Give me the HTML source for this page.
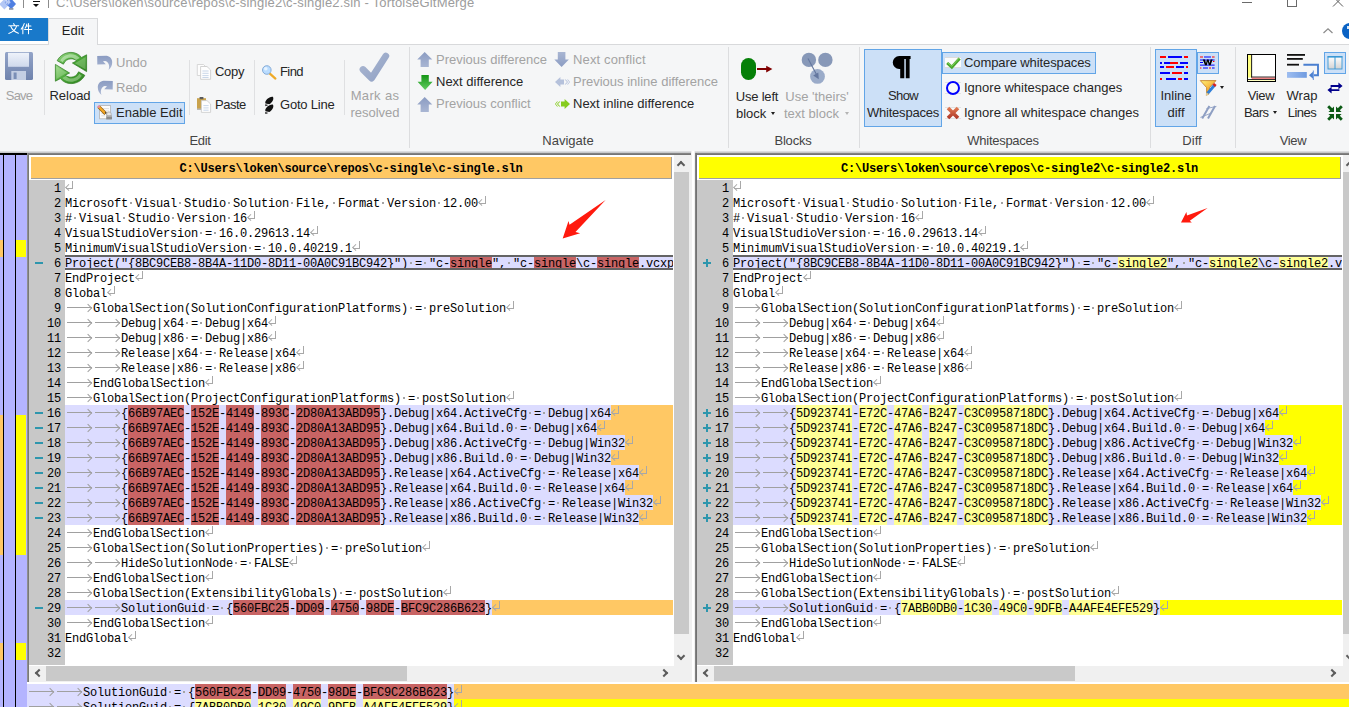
<!DOCTYPE html>
<html><head><meta charset="utf-8"><title>TortoiseGitMerge</title>
<style>
*{margin:0;padding:0;box-sizing:border-box}
html,body{width:1349px;height:707px;overflow:hidden;background:#fff}
body{font-family:"Liberation Sans",sans-serif;font-size:13px;color:#1e1e1e;position:relative}
.abs,#app *{position:absolute}
#app{position:absolute;left:0;top:0;width:1349px;height:707px;overflow:hidden;background:#fff}
/* ---------- title / tabs ---------- */
#title{opacity:0.99;left:56px;top:-5px;font-size:13px;line-height:16px;color:#9c9c9c;white-space:pre;letter-spacing:0.18px}
#filebtn{left:0;top:18px;width:48px;height:23px;background:#1979ca}
#edittab{left:48px;top:18px;width:50px;height:27px;background:#f5f6f7;border:1px solid #d8d9db;border-bottom:none}
#edittab span{left:0;width:48px;top:4px;text-align:center;font-size:13px;line-height:16px;color:#1e1e1e}
#ribbon{left:0;top:44px;width:1349px;height:108px;background:#f5f6f7;border-top:1px solid #d8d9db}
#ribshadow{left:0;top:151px;width:1349px;height:2px;background:linear-gradient(#e6e7e9,#bfc0c2)}
.gsep{top:47px;width:1px;height:101px;background:#dcdddf}
.sep{top:60px;width:1px;height:55px;background:#dfe0e2}
.lb{white-space:pre;line-height:16px;font-size:13px;color:#262626;margin-top:1px}
.lb.c{text-align:center}
.dis{color:#a3a3a3}
.gl{color:#444;text-align:center;top:133px;line-height:16px;white-space:pre}
.hot{background:#cce0f7;border:1px solid #62a5e7}
.dd{width:0;height:0;border-left:2.8px solid transparent;border-right:2.8px solid transparent;border-top:3.2px solid #1e1e1e}
svg{overflow:visible}
/* ---------- work area ---------- */
#loc{left:0;top:153px;width:27px;height:554px;background:#b4b4ff;border-top:2px solid #000}
#loc i{background:#000;width:1px;top:0;height:554px}
.pborder{background:#808080}
.hdr{top:157px;height:22px;font-family:"Liberation Mono",monospace;font-weight:bold;font-size:12px;letter-spacing:-0.2px;line-height:25px;text-align:center;color:#000;white-space:pre;border-right:1px solid #a0a0a0;border-bottom:1px solid #a0a0a0}
.pane{top:180px;height:486px;overflow:hidden}
.row{left:0;width:100%;height:15px}
.mg{left:0;top:0;width:36px;height:15px;background:#c8c8c8}
.mg span{right:4px;top:0;font-family:"Liberation Mono",monospace;font-size:12px;letter-spacing:-0.2px;line-height:19px;height:15px;color:#000;white-space:pre}
.mgfill{left:0;width:36px;background:#c8c8c8}
.mi{left:6px;top:7px;width:8px;height:2px;background:#2e96ad}
.pl{left:6px;top:7px;width:8px;height:2px;background:#2e96ad}
.pl:after{content:"";position:absolute;left:3px;top:-3px;width:2px;height:8px;background:#2e96ad}
.ln{left:36px;top:0;right:0;height:15px;overflow:hidden}
.ln u{top:0;height:15px;text-decoration:none}
.ln pre{left:0;top:0;height:15px;font-family:"Liberation Mono",monospace;font-size:12px;letter-spacing:-0.2px;line-height:19px;white-space:pre;color:#000}
.ln .d{top:7px;width:2px;height:2px;background:#a4a4a4}
.tb{top:0;width:28px;height:15px}
.tb:before{content:"";position:absolute;left:2px;top:7px;width:25px;height:1px;background:#a0a0a0}
.tb:after{content:"";position:absolute;left:20.3px;top:5px;width:5px;height:5px;border-top:1px solid #a0a0a0;border-right:1px solid #a0a0a0;transform:rotate(45deg)}
.eol{top:0;width:7px;height:15px}
.eol:before{content:"";position:absolute;left:1px;top:1px;width:6px;height:7px;border-right:1px solid #a8a8a8;border-bottom:1px solid #a8a8a8}
.eol:after{content:"";position:absolute;left:1.4px;top:5px;width:4.4px;height:4.4px;border-left:1px solid #a8a8a8;border-bottom:1px solid #a8a8a8;transform:rotate(45deg)}
.selb{height:2px;background:#646464}
.sbv{top:155px;width:17px;height:511px;background:#f0f0f0}
.sbh{top:666px;height:16px;background:#f0f0f0}
.thumb{background:#c9c9c9}
.chev{width:6px;height:6px;border-left:2px solid #5c5c5c;border-top:2px solid #5c5c5c}
#bot{left:27px;top:684px;width:1322px;height:23px;overflow:hidden}
#bot .ln{left:0;width:1322px}
</style></head><body>
<div id="app">

<!-- title bar -->
<svg style="left:0;top:0" width="16" height="10" viewBox="0 0 16 10"><path d="M4.4 -1L9.4 4.2L4.4 9.6L-0.8 4.2Z" fill="#b3c7f5"/><path d="M11.2 -1.4L16 4L11.2 9.2L6.2 4Z" fill="#4f7fe2"/><path d="M7.8 -1L11 2.4L7.8 5.8L4.6 2.4Z" fill="#88a6ec"/><path d="M6 0.4H7V1.4H6ZM8 0.4H9V1.4H8ZM7 1.4H8V2.4H7ZM9 1.4H10V2.4H9ZM6 2.4H7V3.4H6ZM8 2.4H9V3.4H8Z" fill="#e4ecfb"/><rect x="9" y="8" width="4.4" height="1.8" fill="#8d97ad"/></svg>
<div style="left:23px;top:0;width:1px;height:8px;background:#8c8c8c"></div>
<div style="left:33px;top:1px;width:7px;height:1.4px;background:#111"></div>
<div style="left:33.4px;top:4px;width:0;height:0;border-left:3.1px solid transparent;border-right:3.1px solid transparent;border-top:3.1px solid #111"></div>
<div style="left:48px;top:0;width:1px;height:8px;background:#8c8c8c"></div>
<div id="title">C:\Users\loken\source\repos\c-single2\c-single2.sln - TortoiseGitMerge</div>
<div style="left:1242px;top:2px;width:10px;height:1px;background:#6a6a6a"></div>
<div style="left:1287px;top:-4px;width:10px;height:11px;border:1px solid #6a6a6a"></div>
<svg style="left:1333px;top:-4px" width="10" height="11" viewBox="0 0 10 11"><path d="M0 0.5L10 10.5M10 0.5L0 10.5" stroke="#5a5a5a" stroke-width="1" fill="none"/></svg>

<!-- tab row -->
<div id="filebtn">
<svg style="left:8px;top:5px" width="24.5" height="11.5" viewBox="0 0 32 15" fill="none" stroke="#fff" stroke-width="1.35" stroke-linecap="round">
<path d="M7.3 0.8L8.3 2.6M1 3.6H14M3.6 4.2C5 8 8.5 11.6 13.6 13.4M11.2 4.2C10 8.5 6.5 11.8 1 13.6"/>
<path d="M21.2 0.8C20.4 3.6 19 6 17.2 8M19.4 5.2V14M24.6 1.4C24.2 3.6 23.4 5.4 22.4 6.6M24 4H30M21.6 8.6H31M26.8 0.8V14"/>
</svg></div>
<div id="edittab"><span>Edit</span></div>
<svg style="left:1323px;top:28px" width="10" height="6" viewBox="0 0 10 6"><path d="M0.5 5L5 0.8L9.5 5" stroke="#8a8a8a" stroke-width="1.2" fill="none"/></svg>
<div style="left:1342px;top:23px;width:16px;height:16px;border-radius:8px;background:#0a62c4"></div>
<div style="left:1347px;top:26px;width:2px;height:3px;background:#dbe8f7"></div>

<!-- ribbon -->
<div id="ribbon"></div>
<div id="edittab2" style="left:49px;top:43px;width:48px;height:3px;background:#f5f6f7"></div>
<div id="ribshadow"></div>
<svg width="0" height="0" style="left:0;top:0"><defs>
<linearGradient id="gSave" x1="0" y1="0" x2="0" y2="1"><stop offset="0" stop-color="#93a4c8"/><stop offset="1" stop-color="#6f83ad"/></linearGradient>
<linearGradient id="gSaveL" x1="0" y1="0" x2="0" y2="1"><stop offset="0" stop-color="#eef2fa"/><stop offset="1" stop-color="#cfd9ec"/></linearGradient>
<linearGradient id="gGreen" x1="0" y1="0" x2="1" y2="1"><stop offset="0" stop-color="#9edb8c"/><stop offset="0.5" stop-color="#4aa838"/><stop offset="1" stop-color="#2a7d1c"/></linearGradient>
<linearGradient id="gGreen2" x1="1" y1="1" x2="0" y2="0"><stop offset="0" stop-color="#9edb8c"/><stop offset="0.5" stop-color="#4aa838"/><stop offset="1" stop-color="#2a7d1c"/></linearGradient>
<linearGradient id="gArr" x1="0" y1="0" x2="0" y2="1"><stop offset="0" stop-color="#8b9cc2"/><stop offset="1" stop-color="#a9b6d3"/></linearGradient>
<linearGradient id="gArrD" x1="0" y1="0" x2="0" y2="1"><stop offset="0" stop-color="#a9b6d3"/><stop offset="1" stop-color="#8b9cc2"/></linearGradient>
<linearGradient id="gGArr" x1="0" y1="0" x2="0" y2="1"><stop offset="0" stop-color="#159515"/><stop offset="1" stop-color="#62cc62"/></linearGradient>
<linearGradient id="gChk" x1="0" y1="0" x2="1" y2="1"><stop offset="0" stop-color="#a9b6d1"/><stop offset="1" stop-color="#93a3c5"/></linearGradient>
<linearGradient id="gFun" x1="0" y1="0" x2="1" y2="1"><stop offset="0" stop-color="#fff27a"/><stop offset="1" stop-color="#f08a10"/></linearGradient>
<linearGradient id="gPane" x1="0" y1="0" x2="0" y2="1"><stop offset="0" stop-color="#ffffff"/><stop offset="1" stop-color="#d2d2d2"/></linearGradient>
<linearGradient id="gRedX" x1="0" y1="0" x2="0" y2="1"><stop offset="0" stop-color="#e07850"/><stop offset="1" stop-color="#b03a2a"/></linearGradient>
<linearGradient id="gBlueR" x1="0" y1="0" x2="1" y2="0"><stop offset="0" stop-color="#9dbdf0"/><stop offset="1" stop-color="#6f9be0"/></linearGradient>
</defs></svg>

<!-- group separators -->
<div class="gsep" style="left:409px"></div><div class="gsep" style="left:728px"></div><div class="gsep" style="left:859px"></div>
<div class="gsep" style="left:1150px"></div><div class="gsep" style="left:1235px"></div>
<div class="sep" style="left:44px"></div><div class="sep" style="left:189px"></div><div class="sep" style="left:254px"></div><div class="sep" style="left:344px"></div>

<!-- group labels -->
<div class="gl" style="left:150px;width:100px;letter-spacing:-0.4px">Edit</div>
<div class="gl" style="left:518px;width:100px">Navigate</div>
<div class="gl" style="left:743px;width:100px;letter-spacing:-0.2px">Blocks</div>
<div class="gl" style="left:953px;width:100px;letter-spacing:-0.28px">Whitespaces</div>
<div class="gl" style="left:1142px;width:100px">Diff</div>
<div class="gl" style="left:1243px;width:100px;letter-spacing:-0.4px">View</div>

<!-- Save -->
<svg style="left:5px;top:52px" width="28" height="28" viewBox="0 0 28 28"><rect x="0" y="0" width="28" height="28" rx="1.5" fill="url(#gSave)"/><rect x="3" y="0.8" width="21" height="14" fill="url(#gSaveL)"/><rect x="6.3" y="19" width="14.7" height="9" fill="#c3cee3"/><rect x="8.6" y="20.5" width="3" height="6.5" fill="#7a8eb6"/></svg>
<div class="lb c dis" style="left:-11px;width:60px;top:87px;letter-spacing:-0.8px">Save</div>
<!-- Reload -->
<svg style="left:55px;top:52px" width="32" height="32" viewBox="0 0 32 32">
<path id="rl" d="M2.2 8.7C5 3.2 10.5 0.4 16 0.4C20.2 0.4 24 2.3 26.6 5.4L31.6 2.8V19.6L17.4 11L21.6 8.9C20.2 7.5 18.2 6.8 16 6.8C12.6 6.8 9.8 8.9 8.4 12.2Z" fill="url(#gGreen)" stroke="#2a7a1a" stroke-width="0.7"/>
<path d="M2.2 8.7C5 3.2 10.5 0.4 16 0.4C20.2 0.4 24 2.3 26.6 5.4L31.6 2.8V19.6L17.4 11L21.6 8.9C20.2 7.5 18.2 6.8 16 6.8C12.6 6.8 9.8 8.9 8.4 12.2Z" fill="url(#gGreen2)" stroke="#2a7a1a" stroke-width="0.7" transform="rotate(180 16 16)"/>
<path d="M5.2 8.2C7.6 4.4 11.6 2.2 16 2.2C19.4 2.2 22.6 3.6 24.8 6L21 8C19.4 6.2 17.6 5.4 16 5.4C12.4 5.4 9.2 7.4 7.6 10.2Z" fill="#d9f2cf" opacity="0.55"/>
<path d="M5.2 8.2C7.6 4.4 11.6 2.2 16 2.2C19.4 2.2 22.6 3.6 24.8 6L21 8C19.4 6.2 17.6 5.4 16 5.4C12.4 5.4 9.2 7.4 7.6 10.2Z" fill="#d9f2cf" opacity="0.4" transform="rotate(180 16 16)"/>
<path d="M30.6 5L30.6 17.6L20 11.2Z" fill="#bfe6b0" opacity="0.35"/>
<path d="M30.6 5L30.6 17.6L20 11.2Z" fill="#bfe6b0" opacity="0.35" transform="rotate(180 16 16)"/>
</svg>
<div class="lb c" style="left:40px;width:60px;top:87px">Reload</div>
<!-- Undo / Redo / Enable Edit -->
<svg style="left:97px;top:54px" width="16" height="16" viewBox="0 0 16 16"><path d="M0.2 1.9L9.4 1.7C12.8 2 15.2 4.8 15.2 8.2C15.2 11.2 14 13.8 11.5 15.9C12.2 14 12.4 12 11.8 10.4C11 8.2 9.6 7.2 8 7L6 7.2L8.8 10.2L0.3 10.4Z" fill="url(#gArr)"/></svg>
<div class="lb dis" style="left:116px;top:54px">Undo</div>
<svg style="left:97.3px;top:78.7px" width="16" height="16" viewBox="0 0 16 16"><path transform="translate(16 0) scale(-1 1)" d="M0.2 1.9L9.4 1.7C12.8 2 15.2 4.8 15.2 8.2C15.2 11.2 14 13.8 11.5 15.9C12.2 14 12.4 12 11.8 10.4C11 8.2 9.6 7.2 8 7L6 7.2L8.8 10.2L0.3 10.4Z" fill="url(#gArr)"/></svg>
<div class="lb dis" style="left:116px;top:79px">Redo</div>
<div class="hot" style="left:94px;top:102px;width:91px;height:22px"></div>
<svg style="left:98px;top:104px" width="16" height="16" viewBox="0 0 16 16"><rect x="1.6" y="1.6" width="11" height="13.2" fill="#fbfbfb" stroke="#b4b4b4" stroke-width="0.8"/><path d="M3.4 4.6H11M3.4 7H11M3.4 9.4H8M3.4 11.8H7" stroke="#d6d6d6" stroke-width="0.8"/><path d="M0.6 2.6L7.6 9.8" stroke="#8a5a10" stroke-width="3.4"/><path d="M0.8 2.8L7.4 9.6" stroke="#f6a823" stroke-width="2.2"/><path d="M0 1.9L1.5 3.4" stroke="#e98aa0" stroke-width="2.6"/><path d="M6.6 8.4L9 11.2L8 8Z" fill="#3a3a3a"/><circle cx="11" cy="10.2" r="2.3" fill="#e6e6e6" stroke="#b0b0b0" stroke-width="0.9"/><rect x="8.2" y="11.6" width="5.8" height="3.8" fill="#8a8a8a"/><rect x="8.2" y="11.6" width="5.8" height="1.2" fill="#b4b4b4"/></svg>
<div class="lb" style="left:116px;top:104px">Enable Edit</div>
<!-- Copy / Paste -->
<svg style="left:196px;top:64px" width="16" height="16" viewBox="0 0 16 16"><path d="M1.3 0.5H7.5L10 3V11.5H1.3Z" fill="#fdfdfd" stroke="#cfcfcf" stroke-width="0.8"/><path d="M4.6 2.5H11L14.6 6V15.3H4.6Z" fill="#fefefe" stroke="#c8c8c8" stroke-width="0.8"/><path d="M6.4 7H12.6M6.4 9.3H12.6M6.4 11.6H12.6M6.4 13.5H12.6" stroke="#c3d3e6" stroke-width="0.9"/></svg>
<div class="lb" style="left:215px;top:63px;letter-spacing:-0.3px">Copy</div>
<svg style="left:196px;top:97px" width="16" height="16" viewBox="0 0 16 16"><rect x="1" y="1.2" width="9" height="11.5" fill="#c9a24c"/><rect x="1" y="11.5" width="9" height="1.4" fill="#b9b9b9"/><rect x="3.6" y="0" width="3.8" height="2.2" fill="#5a5a5a"/><path d="M5.4 3.6H11L14.6 7V15.4H5.4Z" fill="#fefefe" stroke="#cacaca" stroke-width="0.8"/><path d="M7.4 8.6H12.6M7.4 10.9H12.6M7.4 13.2H12.6" stroke="#c3d3e6" stroke-width="0.9"/></svg>
<div class="lb" style="left:215px;top:96px;letter-spacing:-0.5px">Paste</div>
<!-- Find / Goto -->
<svg style="left:262px;top:64px" width="16" height="16" viewBox="0 0 16 16"><path d="M7.6 9.4L13.4 14.6" stroke="#eeaa28" stroke-width="2.2" stroke-linecap="round"/><circle cx="4.8" cy="6" r="4.3" fill="#b9dcff" stroke="#86acd8" stroke-width="1"/><circle cx="3.8" cy="4.8" r="1.8" fill="#e8f4ff"/></svg>
<div class="lb" style="left:280px;top:63px;letter-spacing:-0.6px">Find</div>
<svg style="left:263px;top:96px" width="12" height="18" viewBox="0 0 12 18"><path d="M9.8 0.8C11.3 2.6 9.6 6.4 6.4 8.3L2.4 7.4C1.4 4.6 6.4 0.2 9.8 0.8ZM2.2 8.3L5.4 9.1L2.4 10.2Z" fill="#111"/><path d="M9.8 8.6C11.3 10.4 9.6 14.2 6.4 16.1L2.4 15.2C1.4 12.4 6.4 8 9.8 8.6ZM2.2 16.1L5.4 16.9L2.4 18Z" fill="#111"/></svg>
<div class="lb" style="left:280px;top:96px;letter-spacing:-0.2px">Goto Line</div>
<!-- Mark as resolved -->
<svg style="left:358px;top:51px" width="34" height="32" viewBox="0 0 34 32"><path d="M5 18.5L13.6 27.2L27.8 5" stroke="url(#gChk)" stroke-width="6.8" stroke-linecap="round" stroke-linejoin="round" fill="none"/></svg>
<div class="lb c dis" style="left:335px;width:80px;top:87px;letter-spacing:0.35px">Mark as</div>
<div class="lb c dis" style="left:335px;width:80px;top:104px">resolved</div>

<!-- Navigate -->
<svg style="left:417px;top:52px" width="16" height="15" viewBox="0 0 16 15"><path d="M7.7 0L15.3 7.6H11.8V15H3.6V7.6H0.2Z" fill="url(#gArr)"/></svg>
<div class="lb dis" style="left:436px;top:51px">Previous difference</div>
<svg style="left:417px;top:75px" width="16" height="15" viewBox="0 0 16 15"><path d="M4.4 0H11.8V6.8H15.6L8.1 15L0.6 6.8H4.4Z" fill="url(#gGArr)"/></svg>
<div class="lb" style="left:436px;top:73px">Next difference</div>
<svg style="left:417px;top:97px" width="16" height="15" viewBox="0 0 16 15"><path d="M7.7 0L15.3 7.6H11.8V15H3.6V7.6H0.2Z" fill="url(#gArr)"/></svg>
<div class="lb dis" style="left:436px;top:95px">Previous conflict</div>
<svg style="left:554px;top:52px" width="16" height="15" viewBox="0 0 16 15"><path d="M3.8 0H11.4V7.4H14.9L7.6 15L0.3 7.4H3.8Z" fill="url(#gArrD)"/></svg>
<div class="lb dis" style="left:573px;top:51px;letter-spacing:0.15px">Next conflict</div>
<svg style="left:555px;top:77px" width="15" height="10" viewBox="0 0 15 10"><path d="M0 5L5.4 0V2.6H9V7.4H5.4V10Z" fill="#b5c1db"/><path d="M9.6 2.6L12 5L9.6 7.4H10.8L13 5L10.8 2.6ZM12 2.6L14.2 5L12 7.4H13L15 5L13 2.6Z" fill="#b5c1db"/></svg>
<div class="lb dis" style="left:573px;top:73px">Previous inline difference</div>
<svg style="left:555px;top:99px" width="15" height="10" viewBox="0 0 15 10"><path d="M15 5L9.6 0V2.6H6V7.4H9.6V10Z" fill="#86cc1e"/><path d="M5.4 2.6L3 5L5.4 7.4H4.2L2 5L4.2 2.6ZM3 2.6L0.8 5L3 7.4H2L0 5L2 2.6Z" fill="#86cc1e"/></svg>
<div class="lb" style="left:573px;top:95px">Next inline difference</div>

<!-- Blocks -->
<div style="left:741px;top:57.5px;width:15px;height:22.5px;border-radius:7.5px;background:#058008"></div>
<svg style="left:757px;top:65px" width="16" height="8" viewBox="0 0 16 8"><path d="M0 3.1H10V5.1H0Z M9.2 0.8L15.4 4.1L9.2 7.4Z" fill="#800000"/></svg>
<div class="lb c" style="left:717px;width:80px;top:88px;letter-spacing:-0.2px">Use left</div>
<div class="lb" style="left:736px;top:105px">block</div>
<div class="dd" style="left:771px;top:112px;border-top-color:#1e1e1e"></div>
<svg style="left:800px;top:51px" width="34" height="34" viewBox="0 0 34 34"><circle cx="8.9" cy="8.9" r="7.2" fill="#8798b8"/><circle cx="25.4" cy="8.9" r="7.2" fill="#8798b8"/><circle cx="17.5" cy="25.4" r="7.4" fill="#9aabc9"/><path d="M8 7.4L17.3 25" stroke="#64779f" stroke-width="1.1"/><path d="M18.8 28.2L18.3 21.6L13.2 24.4Z" fill="#64779f"/></svg>
<div class="lb c dis" style="left:777px;width:80px;top:88px">Use 'theirs'</div>
<div class="lb dis" style="left:784px;top:105px">text block</div>
<div class="dd" style="left:845px;top:112px;border-top-color:#b4b4b4"></div>

<!-- Whitespaces -->
<div class="hot" style="left:864px;top:49px;width:78px;height:78px"></div>
<svg style="left:892px;top:56px" width="19" height="23" viewBox="0 0 19 23"><path d="M7.2 0H18.6V3H17.6V22.2H13.8V3H12.3V22.2H8.2V12.9H7.2A6.45 6.45 0 0 1 7.2 0Z" fill="#000"/></svg>
<div class="lb c" style="left:863px;width:80px;top:87px;letter-spacing:-0.6px">Show</div>
<div class="lb c" style="left:863px;width:80px;top:104px;letter-spacing:-0.22px">Whitespaces</div>
<div class="hot" style="left:942px;top:52px;width:154px;height:22px"></div>
<div style="left:945px;top:57px;width:16px;height:11px;background:#fbfbfb;border-top:1px solid #dcdcdc;border-bottom:1px solid #dcdcdc"></div>
<svg style="left:945px;top:55px" width="16" height="16" viewBox="0 0 16 16"><path d="M2.2 8L6.8 12.2L14.6 3.4" stroke="#4aa82c" stroke-width="3" fill="none" stroke-linejoin="miter"/><path d="M2.6 7.6L6.8 11.2L14 3.2" stroke="#8fd86a" stroke-width="0.9" fill="none"/></svg>
<div class="lb" style="left:964px;top:54px;letter-spacing:-0.1px">Compare whitespaces</div>
<div style="left:945px;top:82px;width:16px;height:12px;background:#f9f9f9;border-top:1px solid #e2e2e2;border-bottom:1px solid #e2e2e2"></div>
<div style="left:946px;top:81px;width:14px;height:14px;border-radius:7px;border:2px solid #0000ff"></div>
<div class="lb" style="left:964px;top:79px">Ignore whitespace changes</div>
<div style="left:945px;top:107px;width:16px;height:12px;background:#f9f9f9;border-top:1px solid #e2e2e2;border-bottom:1px solid #e2e2e2"></div>
<svg style="left:946px;top:106px" width="14" height="14" viewBox="0 0 14 14"><path d="M2 2L12 12M12 2L2 12" stroke="url(#gRedX)" stroke-width="3.6"/></svg>
<div class="lb" style="left:964px;top:104px">Ignore all whitespace changes</div>

<!-- Diff -->
<div class="hot" style="left:1155px;top:49px;width:42px;height:78px"></div>
<svg style="left:1160px;top:56px" width="28" height="24" viewBox="0 0 28 24">
<g fill="#ff0000"><rect x="0" y="0" width="6" height="2"/><rect x="24" y="0" width="4" height="2"/><rect x="10" y="6" width="8" height="2"/><rect x="6" y="10" width="8" height="2"/><rect x="26" y="10" width="2" height="2"/><rect x="12" y="16" width="10" height="2"/><rect x="0" y="22" width="2" height="2"/><rect x="18" y="22" width="4" height="2"/></g>
<g fill="#0000ff"><rect x="8" y="0" width="14" height="2"/><rect x="0" y="6" width="2" height="2"/><rect x="4" y="6" width="6" height="2"/><rect x="20" y="6" width="8" height="2"/><rect x="0" y="10" width="4" height="2"/><rect x="16" y="10" width="8" height="2"/><rect x="0" y="16" width="10" height="2"/><rect x="24" y="16" width="4" height="2"/><rect x="6" y="22" width="10" height="2"/><rect x="24" y="22" width="4" height="2"/></g></svg>
<div class="lb c" style="left:1136px;width:80px;top:87px">Inline</div>
<div class="lb c" style="left:1136px;width:80px;top:104px">diff</div>
<div class="hot" style="left:1197px;top:52px;width:22px;height:22px"></div>
<svg style="left:1200px;top:55px" width="16" height="16" viewBox="0 0 16 16">
<g fill="#ff0000"><rect x="0" y="1.5" width="3" height="1"/><rect x="12" y="1.5" width="2.6" height="1"/><rect x="0" y="12.5" width="1.4" height="1"/><rect x="9" y="12.5" width="2" height="1"/><rect x="13" y="6" width="1.4" height="1"/></g>
<g fill="#0000ff"><rect x="4" y="1.5" width="7" height="1"/><rect x="0" y="4.5" width="14.6" height="1"/><rect x="0" y="7" width="3" height="1"/><rect x="0" y="9.6" width="14.6" height="1"/><rect x="3" y="12.5" width="5" height="1"/><rect x="12" y="12.5" width="2.6" height="1"/></g>
<path d="M2.8 4.4H5L6 8.3L7 4.4H8.6L9.6 8.3L10.6 4.4H12.6L10.6 10.2H8.8L7.8 6.6L6.8 10.2H5Z" fill="#000"/></svg>
<svg style="left:1200px;top:80px" width="17" height="17" viewBox="0 0 17 17"><path d="M0.3 0.6H16L9.4 7.6V11.2L6.6 12.6V7.6Z" fill="url(#gFun)" stroke="#b86a10" stroke-width="0.7"/><path d="M14.6 5L7.4 13.6" stroke="#2f7fd8" stroke-width="3"/><path d="M15.4 4L13.8 5.9" stroke="#d82020" stroke-width="3.2"/><path d="M6.2 15.6L6.6 12.4L9 14.2Z" fill="#f3d9a0" stroke="#b89040" stroke-width="0.4"/></svg>
<div class="dd" style="left:1220px;top:86px"></div>
<svg style="left:1200px;top:105px" width="17" height="15" viewBox="0 0 17 15"><path d="M2.2 13.6L9.4 1M8 13.6L15 1" stroke="#8e9fc3" stroke-width="2"/><path d="M0.4 12.4L11 8.2M6.4 3.6L16.4 1.4" stroke="#8e9fc3" stroke-width="0.9"/></svg>

<!-- View -->
<svg style="left:1247px;top:54px" width="29" height="28" viewBox="0 0 29 28"><rect x="0.5" y="0.5" width="28" height="27" fill="#fff" stroke="#000"/><rect x="1" y="1" width="3.4" height="22.6" fill="#ffff80"/><rect x="4.2" y="1" width="0.9" height="22.6" fill="#000"/><rect x="4.4" y="22.6" width="24" height="1" fill="#000"/><rect x="4.6" y="23.6" width="23.4" height="1.6" fill="#f08080"/><rect x="1" y="25.2" width="27" height="0.8" fill="#000"/><rect x="1" y="26" width="27" height="1" fill="#ffffc0"/></svg>
<div class="lb c" style="left:1221px;width:80px;top:87px;letter-spacing:-0.3px">View</div>
<div class="lb" style="left:1244px;top:104px;letter-spacing:-0.6px">Bars</div>
<div class="dd" style="left:1273px;top:111px"></div>
<svg style="left:1287px;top:54px" width="32" height="27" viewBox="0 0 32 27"><rect x="0" y="0" width="18" height="1.8" fill="#111"/><rect x="0" y="4" width="15.8" height="1.8" fill="#111"/><rect x="0" y="9.8" width="12" height="1.8" fill="#111"/><path d="M16.4 10.7H31V21.2H24" stroke="#4a7fd0" stroke-width="1.9" fill="none"/><path d="M22 21.2L26.6 17.2V25.2Z" fill="#4a7fd0"/><path d="M26.4 16.6V26" stroke="#7aa2e2" stroke-width="1.2"/><rect x="0" y="18" width="19.8" height="5.8" fill="url(#gBlueR)"/></svg>
<div class="lb c" style="left:1262px;width:80px;top:87px">Wrap</div>
<div class="lb c" style="left:1262px;width:80px;top:104px;letter-spacing:-0.55px">Lines</div>
<div class="hot" style="left:1324px;top:52px;width:22px;height:22px"></div>
<svg style="left:1327px;top:55px" width="16" height="16" viewBox="0 0 16 16"><rect x="1" y="1.6" width="14" height="12.4" fill="url(#gPane)" stroke="#3a98d4" stroke-width="0.9"/><rect x="0.6" y="1" width="14.8" height="1.6" fill="#3a98d4"/><rect x="7.5" y="2" width="1" height="12" fill="#3a98d4"/></svg>
<svg style="left:1327px;top:82px" width="16" height="12" viewBox="0 0 16 12"><path d="M3.6 3H11.4V0.6L15.6 3.9L11.4 7.2V4.9H3.6Z" fill="#00008b"/><path d="M12.4 7.2H4.6V4.8L0.4 8.1L4.6 11.4V9.1H12.4Z" fill="#00008b"/></svg>
<svg style="left:1327px;top:105px" width="16" height="16" viewBox="0 0 16 16"><g fill="#0b5a14"><path d="M7 7H1.4L3.2 5.2L0.2 2.2L2.2 0.2L5.2 3.2L7 1.4Z"/><path d="M9 7V1.4L10.8 3.2L13.8 0.2L15.8 2.2L12.8 5.2L14.6 7Z"/><path d="M7 9V14.6L5.2 12.8L2.2 15.8L0.2 13.8L3.2 10.8L1.4 9Z"/><path d="M9 9H14.6L12.8 10.8L15.8 13.8L13.8 15.8L10.8 12.8L9 14.6Z"/></g></svg>


<!-- locator bar -->
<div id="loc">
 <i style="left:3px"></i><i style="left:15px"></i>
</div>
<div style="left:0;top:240px;width:3px;height:17px;background:#ffc864"></div>
<div style="left:16px;top:240px;width:10px;height:17px;background:#ffff00"></div>
<div style="left:0;top:415px;width:3px;height:140px;background:#ffc864"></div>
<div style="left:16px;top:415px;width:10px;height:140px;background:#ffff00"></div>
<div style="left:0;top:643px;width:3px;height:17px;background:#ffc864"></div>
<div style="left:16px;top:643px;width:10px;height:17px;background:#ffff00"></div>

<!-- pane frames -->
<div style="left:27px;top:153px;width:1322px;height:2px;background:linear-gradient(#8a8a8a,#6e6e6e)"></div>
<div style="left:27px;top:153px;width:2px;height:529px;background:linear-gradient(90deg,#9a9a9a,#6e6e6e)"></div>
<div style="left:695px;top:153px;width:2px;height:529px;background:linear-gradient(90deg,#8a8a8a,#6a6a6a)"></div>
<div style="left:691px;top:151px;width:4px;height:531px;background:#f0f0f0"></div>
<div style="left:692px;top:151px;width:2px;height:531px;background:#fff"></div>

<!-- left pane -->
<div class="hdr" style="left:31px;width:641px;background:#ffc864">C:\Users\loken\source\repos\c-single\c-single.sln</div>
<div class="mgfill" style="left:29px;top:180px;height:485px"></div>
<div class="pane" style="left:29px;width:644px">
<div class="row" style="top:0px"><div class="mg"><span>1</span></div><div class="ln"><i class="eol" style="left:0px"></i></div></div>
<div class="row" style="top:15px"><div class="mg"><span>2</span></div><div class="ln"><i class="d" style="left:65px"></i><i class="d" style="left:114px"></i><i class="d" style="left:163px"></i><i class="d" style="left:226px"></i><i class="d" style="left:268px"></i><i class="d" style="left:317px"></i><i class="d" style="left:373px"></i><pre class="tx">Microsoft Visual Studio Solution File, Format Version 12.00</pre><i class="eol" style="left:413px"></i></div></div>
<div class="row" style="top:30px"><div class="mg"><span>3</span></div><div class="ln"><i class="d" style="left:9px"></i><i class="d" style="left:58px"></i><i class="d" style="left:107px"></i><i class="d" style="left:163px"></i><pre class="tx"># Visual Studio Version 16</pre><i class="eol" style="left:182px"></i></div></div>
<div class="row" style="top:45px"><div class="mg"><span>4</span></div><div class="ln"><i class="d" style="left:135px"></i><i class="d" style="left:149px"></i><pre class="tx">VisualStudioVersion = 16.0.29613.14</pre><i class="eol" style="left:245px"></i></div></div>
<div class="row" style="top:60px"><div class="mg"><span>5</span></div><div class="ln"><i class="d" style="left:184px"></i><i class="d" style="left:198px"></i><pre class="tx">MinimumVisualStudioVersion = 10.0.40219.1</pre><i class="eol" style="left:287px"></i></div></div>
<div class="row sel" style="top:75px"><div class="mg"><i class="mi"></i><span>6</span></div><div class="ln" style="background:#ffc864"><u style="left:0;width:931px;background:#dcdcff"></u><u style="left:385px;width:42px;background:#c86464"></u><u style="left:469px;width:42px;background:#c86464"></u><u style="left:532px;width:42px;background:#c86464"></u><u style="left:665px;width:56px;background:#c86464"></u><u style="left:728px;width:28px;background:#c86464"></u><u style="left:763px;width:28px;background:#c86464"></u><u style="left:798px;width:28px;background:#c86464"></u><u style="left:833px;width:84px;background:#c86464"></u><i class="d" style="left:345px"></i><i class="d" style="left:359px"></i><i class="d" style="left:443px"></i><i class="d" style="left:646px"></i><pre class="tx">Project(&quot;{8BC9CEB8-8B4A-11D0-8D11-00A0C91BC942}&quot;) = &quot;c-single&quot;, &quot;c-single\c-single.vcxproj&quot;, &quot;{66B97AEC-152E-4149-893C-2D80A13ABD95}&quot;</pre><i class="eol" style="left:931px"></i></div></div>
<div class="row" style="top:90px"><div class="mg"><span>7</span></div><div class="ln"><pre class="tx">EndProject</pre><i class="eol" style="left:70px"></i></div></div>
<div class="row" style="top:105px"><div class="mg"><span>8</span></div><div class="ln"><pre class="tx">Global</pre><i class="eol" style="left:42px"></i></div></div>
<div class="row" style="top:120px"><div class="mg"><span>9</span></div><div class="ln"><i class="d" style="left:345px"></i><i class="d" style="left:359px"></i><pre class="tx">    GlobalSection(SolutionConfigurationPlatforms) = preSolution</pre><i class="tb" style="left:0px"></i><i class="eol" style="left:441px"></i></div></div>
<div class="row" style="top:135px"><div class="mg"><span>10</span></div><div class="ln"><i class="d" style="left:121px"></i><i class="d" style="left:135px"></i><pre class="tx">        Debug|x64 = Debug|x64</pre><i class="tb" style="left:0px"></i><i class="tb" style="left:28px"></i><i class="eol" style="left:203px"></i></div></div>
<div class="row" style="top:150px"><div class="mg"><span>11</span></div><div class="ln"><i class="d" style="left:121px"></i><i class="d" style="left:135px"></i><pre class="tx">        Debug|x86 = Debug|x86</pre><i class="tb" style="left:0px"></i><i class="tb" style="left:28px"></i><i class="eol" style="left:203px"></i></div></div>
<div class="row" style="top:165px"><div class="mg"><span>12</span></div><div class="ln"><i class="d" style="left:135px"></i><i class="d" style="left:149px"></i><pre class="tx">        Release|x64 = Release|x64</pre><i class="tb" style="left:0px"></i><i class="tb" style="left:28px"></i><i class="eol" style="left:231px"></i></div></div>
<div class="row" style="top:180px"><div class="mg"><span>13</span></div><div class="ln"><i class="d" style="left:135px"></i><i class="d" style="left:149px"></i><pre class="tx">        Release|x86 = Release|x86</pre><i class="tb" style="left:0px"></i><i class="tb" style="left:28px"></i><i class="eol" style="left:231px"></i></div></div>
<div class="row" style="top:195px"><div class="mg"><span>14</span></div><div class="ln"><pre class="tx">    EndGlobalSection</pre><i class="tb" style="left:0px"></i><i class="eol" style="left:140px"></i></div></div>
<div class="row" style="top:210px"><div class="mg"><span>15</span></div><div class="ln"><i class="d" style="left:338px"></i><i class="d" style="left:352px"></i><pre class="tx">    GlobalSection(ProjectConfigurationPlatforms) = postSolution</pre><i class="tb" style="left:0px"></i><i class="eol" style="left:441px"></i></div></div>
<div class="row" style="top:225px"><div class="mg"><i class="mi"></i><span>16</span></div><div class="ln" style="background:#ffc864"><u style="left:0;width:546px;background:#dcdcff"></u><u style="left:63px;width:56px;background:#c86464"></u><u style="left:126px;width:28px;background:#c86464"></u><u style="left:161px;width:28px;background:#c86464"></u><u style="left:196px;width:28px;background:#c86464"></u><u style="left:231px;width:84px;background:#c86464"></u><i class="d" style="left:464px"></i><i class="d" style="left:478px"></i><pre class="tx">        {66B97AEC-152E-4149-893C-2D80A13ABD95}.Debug|x64.ActiveCfg = Debug|x64</pre><i class="tb" style="left:0px"></i><i class="tb" style="left:28px"></i><i class="eol" style="left:546px"></i></div></div>
<div class="row" style="top:240px"><div class="mg"><i class="mi"></i><span>17</span></div><div class="ln" style="background:#ffc864"><u style="left:0;width:532px;background:#dcdcff"></u><u style="left:63px;width:56px;background:#c86464"></u><u style="left:126px;width:28px;background:#c86464"></u><u style="left:161px;width:28px;background:#c86464"></u><u style="left:196px;width:28px;background:#c86464"></u><u style="left:231px;width:84px;background:#c86464"></u><i class="d" style="left:450px"></i><i class="d" style="left:464px"></i><pre class="tx">        {66B97AEC-152E-4149-893C-2D80A13ABD95}.Debug|x64.Build.0 = Debug|x64</pre><i class="tb" style="left:0px"></i><i class="tb" style="left:28px"></i><i class="eol" style="left:532px"></i></div></div>
<div class="row" style="top:255px"><div class="mg"><i class="mi"></i><span>18</span></div><div class="ln" style="background:#ffc864"><u style="left:0;width:560px;background:#dcdcff"></u><u style="left:63px;width:56px;background:#c86464"></u><u style="left:126px;width:28px;background:#c86464"></u><u style="left:161px;width:28px;background:#c86464"></u><u style="left:196px;width:28px;background:#c86464"></u><u style="left:231px;width:84px;background:#c86464"></u><i class="d" style="left:464px"></i><i class="d" style="left:478px"></i><pre class="tx">        {66B97AEC-152E-4149-893C-2D80A13ABD95}.Debug|x86.ActiveCfg = Debug|Win32</pre><i class="tb" style="left:0px"></i><i class="tb" style="left:28px"></i><i class="eol" style="left:560px"></i></div></div>
<div class="row" style="top:270px"><div class="mg"><i class="mi"></i><span>19</span></div><div class="ln" style="background:#ffc864"><u style="left:0;width:546px;background:#dcdcff"></u><u style="left:63px;width:56px;background:#c86464"></u><u style="left:126px;width:28px;background:#c86464"></u><u style="left:161px;width:28px;background:#c86464"></u><u style="left:196px;width:28px;background:#c86464"></u><u style="left:231px;width:84px;background:#c86464"></u><i class="d" style="left:450px"></i><i class="d" style="left:464px"></i><pre class="tx">        {66B97AEC-152E-4149-893C-2D80A13ABD95}.Debug|x86.Build.0 = Debug|Win32</pre><i class="tb" style="left:0px"></i><i class="tb" style="left:28px"></i><i class="eol" style="left:546px"></i></div></div>
<div class="row" style="top:285px"><div class="mg"><i class="mi"></i><span>20</span></div><div class="ln" style="background:#ffc864"><u style="left:0;width:574px;background:#dcdcff"></u><u style="left:63px;width:56px;background:#c86464"></u><u style="left:126px;width:28px;background:#c86464"></u><u style="left:161px;width:28px;background:#c86464"></u><u style="left:196px;width:28px;background:#c86464"></u><u style="left:231px;width:84px;background:#c86464"></u><i class="d" style="left:478px"></i><i class="d" style="left:492px"></i><pre class="tx">        {66B97AEC-152E-4149-893C-2D80A13ABD95}.Release|x64.ActiveCfg = Release|x64</pre><i class="tb" style="left:0px"></i><i class="tb" style="left:28px"></i><i class="eol" style="left:574px"></i></div></div>
<div class="row" style="top:300px"><div class="mg"><i class="mi"></i><span>21</span></div><div class="ln" style="background:#ffc864"><u style="left:0;width:560px;background:#dcdcff"></u><u style="left:63px;width:56px;background:#c86464"></u><u style="left:126px;width:28px;background:#c86464"></u><u style="left:161px;width:28px;background:#c86464"></u><u style="left:196px;width:28px;background:#c86464"></u><u style="left:231px;width:84px;background:#c86464"></u><i class="d" style="left:464px"></i><i class="d" style="left:478px"></i><pre class="tx">        {66B97AEC-152E-4149-893C-2D80A13ABD95}.Release|x64.Build.0 = Release|x64</pre><i class="tb" style="left:0px"></i><i class="tb" style="left:28px"></i><i class="eol" style="left:560px"></i></div></div>
<div class="row" style="top:315px"><div class="mg"><i class="mi"></i><span>22</span></div><div class="ln" style="background:#ffc864"><u style="left:0;width:588px;background:#dcdcff"></u><u style="left:63px;width:56px;background:#c86464"></u><u style="left:126px;width:28px;background:#c86464"></u><u style="left:161px;width:28px;background:#c86464"></u><u style="left:196px;width:28px;background:#c86464"></u><u style="left:231px;width:84px;background:#c86464"></u><i class="d" style="left:478px"></i><i class="d" style="left:492px"></i><pre class="tx">        {66B97AEC-152E-4149-893C-2D80A13ABD95}.Release|x86.ActiveCfg = Release|Win32</pre><i class="tb" style="left:0px"></i><i class="tb" style="left:28px"></i><i class="eol" style="left:588px"></i></div></div>
<div class="row" style="top:330px"><div class="mg"><i class="mi"></i><span>23</span></div><div class="ln" style="background:#ffc864"><u style="left:0;width:574px;background:#dcdcff"></u><u style="left:63px;width:56px;background:#c86464"></u><u style="left:126px;width:28px;background:#c86464"></u><u style="left:161px;width:28px;background:#c86464"></u><u style="left:196px;width:28px;background:#c86464"></u><u style="left:231px;width:84px;background:#c86464"></u><i class="d" style="left:464px"></i><i class="d" style="left:478px"></i><pre class="tx">        {66B97AEC-152E-4149-893C-2D80A13ABD95}.Release|x86.Build.0 = Release|Win32</pre><i class="tb" style="left:0px"></i><i class="tb" style="left:28px"></i><i class="eol" style="left:574px"></i></div></div>
<div class="row" style="top:345px"><div class="mg"><span>24</span></div><div class="ln"><pre class="tx">    EndGlobalSection</pre><i class="tb" style="left:0px"></i><i class="eol" style="left:140px"></i></div></div>
<div class="row" style="top:360px"><div class="mg"><span>25</span></div><div class="ln"><i class="d" style="left:261px"></i><i class="d" style="left:275px"></i><pre class="tx">    GlobalSection(SolutionProperties) = preSolution</pre><i class="tb" style="left:0px"></i><i class="eol" style="left:357px"></i></div></div>
<div class="row" style="top:375px"><div class="mg"><span>26</span></div><div class="ln"><i class="d" style="left:170px"></i><i class="d" style="left:184px"></i><pre class="tx">        HideSolutionNode = FALSE</pre><i class="tb" style="left:0px"></i><i class="tb" style="left:28px"></i><i class="eol" style="left:224px"></i></div></div>
<div class="row" style="top:390px"><div class="mg"><span>27</span></div><div class="ln"><pre class="tx">    EndGlobalSection</pre><i class="tb" style="left:0px"></i><i class="eol" style="left:140px"></i></div></div>
<div class="row" style="top:405px"><div class="mg"><span>28</span></div><div class="ln"><i class="d" style="left:275px"></i><i class="d" style="left:289px"></i><pre class="tx">    GlobalSection(ExtensibilityGlobals) = postSolution</pre><i class="tb" style="left:0px"></i><i class="eol" style="left:378px"></i></div></div>
<div class="row" style="top:420px"><div class="mg"><i class="mi"></i><span>29</span></div><div class="ln" style="background:#ffc864"><u style="left:0;width:427px;background:#dcdcff"></u><u style="left:168px;width:56px;background:#c86464"></u><u style="left:231px;width:28px;background:#c86464"></u><u style="left:266px;width:28px;background:#c86464"></u><u style="left:301px;width:28px;background:#c86464"></u><u style="left:336px;width:84px;background:#c86464"></u><i class="d" style="left:142px"></i><i class="d" style="left:156px"></i><pre class="tx">        SolutionGuid = {560FBC25-DD09-4750-98DE-BFC9C286B623}</pre><i class="tb" style="left:0px"></i><i class="tb" style="left:28px"></i><i class="eol" style="left:427px"></i></div></div>
<div class="row" style="top:435px"><div class="mg"><span>30</span></div><div class="ln"><pre class="tx">    EndGlobalSection</pre><i class="tb" style="left:0px"></i><i class="eol" style="left:140px"></i></div></div>
<div class="row" style="top:450px"><div class="mg"><span>31</span></div><div class="ln"><pre class="tx">EndGlobal</pre><i class="eol" style="left:63px"></i></div></div>
<div class="row" style="top:465px"><div class="mg"><span>32</span></div><div class="ln"></div></div>
</div>
<div class="selb" style="left:65px;top:255px;width:608px"></div>
<div class="selb" style="left:65px;top:268px;width:608px"></div>
<div class="sbv" style="left:674px"><div class="thumb" style="left:0;top:17px;width:15px;height:462px"></div>
 <div class="chev" style="left:4px;top:7px;transform:rotate(45deg)"></div>
 <div class="chev" style="left:4px;top:498px;transform:rotate(225deg)"></div></div>
<div class="sbh" style="left:29px;width:662px"><div class="thumb" style="left:17px;top:0;width:361px;height:15px"></div>
 <div class="chev" style="left:7px;top:4px;transform:rotate(-45deg)"></div>
 <div class="chev" style="left:631.5px;top:4px;transform:rotate(135deg)"></div></div>

<!-- right pane -->
<div class="hdr" style="left:699px;width:642px;background:#ffff00">C:\Users\loken\source\repos\c-single2\c-single2.sln</div>
<div class="mgfill" style="left:697px;top:180px;height:485px"></div>
<div class="pane" style="left:697px;width:645px">
<div class="row" style="top:0px"><div class="mg"><span>1</span></div><div class="ln"><i class="eol" style="left:0px"></i></div></div>
<div class="row" style="top:15px"><div class="mg"><span>2</span></div><div class="ln"><i class="d" style="left:65px"></i><i class="d" style="left:114px"></i><i class="d" style="left:163px"></i><i class="d" style="left:226px"></i><i class="d" style="left:268px"></i><i class="d" style="left:317px"></i><i class="d" style="left:373px"></i><pre class="tx">Microsoft Visual Studio Solution File, Format Version 12.00</pre><i class="eol" style="left:413px"></i></div></div>
<div class="row" style="top:30px"><div class="mg"><span>3</span></div><div class="ln"><i class="d" style="left:9px"></i><i class="d" style="left:58px"></i><i class="d" style="left:107px"></i><i class="d" style="left:163px"></i><pre class="tx"># Visual Studio Version 16</pre><i class="eol" style="left:182px"></i></div></div>
<div class="row" style="top:45px"><div class="mg"><span>4</span></div><div class="ln"><i class="d" style="left:135px"></i><i class="d" style="left:149px"></i><pre class="tx">VisualStudioVersion = 16.0.29613.14</pre><i class="eol" style="left:245px"></i></div></div>
<div class="row" style="top:60px"><div class="mg"><span>5</span></div><div class="ln"><i class="d" style="left:184px"></i><i class="d" style="left:198px"></i><pre class="tx">MinimumVisualStudioVersion = 10.0.40219.1</pre><i class="eol" style="left:287px"></i></div></div>
<div class="row sel" style="top:75px"><div class="mg"><i class="pl"></i><span>6</span></div><div class="ln" style="background:#ffff00"><u style="left:0;width:952px;background:#dcdcff"></u><u style="left:385px;width:49px;background:#ffff96"></u><u style="left:476px;width:49px;background:#ffff96"></u><u style="left:546px;width:49px;background:#ffff96"></u><u style="left:686px;width:56px;background:#ffff96"></u><u style="left:749px;width:28px;background:#ffff96"></u><u style="left:784px;width:28px;background:#ffff96"></u><u style="left:819px;width:28px;background:#ffff96"></u><u style="left:854px;width:84px;background:#ffff96"></u><i class="d" style="left:345px"></i><i class="d" style="left:359px"></i><i class="d" style="left:450px"></i><i class="d" style="left:667px"></i><pre class="tx">Project(&quot;{8BC9CEB8-8B4A-11D0-8D11-00A0C91BC942}&quot;) = &quot;c-single2&quot;, &quot;c-single2\c-single2.vcxproj&quot;, &quot;{5D923741-E72C-47A6-B247-C3C0958718DC}&quot;</pre><i class="eol" style="left:952px"></i></div></div>
<div class="row" style="top:90px"><div class="mg"><span>7</span></div><div class="ln"><pre class="tx">EndProject</pre><i class="eol" style="left:70px"></i></div></div>
<div class="row" style="top:105px"><div class="mg"><span>8</span></div><div class="ln"><pre class="tx">Global</pre><i class="eol" style="left:42px"></i></div></div>
<div class="row" style="top:120px"><div class="mg"><span>9</span></div><div class="ln"><i class="d" style="left:345px"></i><i class="d" style="left:359px"></i><pre class="tx">    GlobalSection(SolutionConfigurationPlatforms) = preSolution</pre><i class="tb" style="left:0px"></i><i class="eol" style="left:441px"></i></div></div>
<div class="row" style="top:135px"><div class="mg"><span>10</span></div><div class="ln"><i class="d" style="left:121px"></i><i class="d" style="left:135px"></i><pre class="tx">        Debug|x64 = Debug|x64</pre><i class="tb" style="left:0px"></i><i class="tb" style="left:28px"></i><i class="eol" style="left:203px"></i></div></div>
<div class="row" style="top:150px"><div class="mg"><span>11</span></div><div class="ln"><i class="d" style="left:121px"></i><i class="d" style="left:135px"></i><pre class="tx">        Debug|x86 = Debug|x86</pre><i class="tb" style="left:0px"></i><i class="tb" style="left:28px"></i><i class="eol" style="left:203px"></i></div></div>
<div class="row" style="top:165px"><div class="mg"><span>12</span></div><div class="ln"><i class="d" style="left:135px"></i><i class="d" style="left:149px"></i><pre class="tx">        Release|x64 = Release|x64</pre><i class="tb" style="left:0px"></i><i class="tb" style="left:28px"></i><i class="eol" style="left:231px"></i></div></div>
<div class="row" style="top:180px"><div class="mg"><span>13</span></div><div class="ln"><i class="d" style="left:135px"></i><i class="d" style="left:149px"></i><pre class="tx">        Release|x86 = Release|x86</pre><i class="tb" style="left:0px"></i><i class="tb" style="left:28px"></i><i class="eol" style="left:231px"></i></div></div>
<div class="row" style="top:195px"><div class="mg"><span>14</span></div><div class="ln"><pre class="tx">    EndGlobalSection</pre><i class="tb" style="left:0px"></i><i class="eol" style="left:140px"></i></div></div>
<div class="row" style="top:210px"><div class="mg"><span>15</span></div><div class="ln"><i class="d" style="left:338px"></i><i class="d" style="left:352px"></i><pre class="tx">    GlobalSection(ProjectConfigurationPlatforms) = postSolution</pre><i class="tb" style="left:0px"></i><i class="eol" style="left:441px"></i></div></div>
<div class="row" style="top:225px"><div class="mg"><i class="pl"></i><span>16</span></div><div class="ln" style="background:#ffff00"><u style="left:0;width:546px;background:#dcdcff"></u><u style="left:63px;width:56px;background:#ffff96"></u><u style="left:126px;width:28px;background:#ffff96"></u><u style="left:161px;width:28px;background:#ffff96"></u><u style="left:196px;width:28px;background:#ffff96"></u><u style="left:231px;width:84px;background:#ffff96"></u><i class="d" style="left:464px"></i><i class="d" style="left:478px"></i><pre class="tx">        {5D923741-E72C-47A6-B247-C3C0958718DC}.Debug|x64.ActiveCfg = Debug|x64</pre><i class="tb" style="left:0px"></i><i class="tb" style="left:28px"></i><i class="eol" style="left:546px"></i></div></div>
<div class="row" style="top:240px"><div class="mg"><i class="pl"></i><span>17</span></div><div class="ln" style="background:#ffff00"><u style="left:0;width:532px;background:#dcdcff"></u><u style="left:63px;width:56px;background:#ffff96"></u><u style="left:126px;width:28px;background:#ffff96"></u><u style="left:161px;width:28px;background:#ffff96"></u><u style="left:196px;width:28px;background:#ffff96"></u><u style="left:231px;width:84px;background:#ffff96"></u><i class="d" style="left:450px"></i><i class="d" style="left:464px"></i><pre class="tx">        {5D923741-E72C-47A6-B247-C3C0958718DC}.Debug|x64.Build.0 = Debug|x64</pre><i class="tb" style="left:0px"></i><i class="tb" style="left:28px"></i><i class="eol" style="left:532px"></i></div></div>
<div class="row" style="top:255px"><div class="mg"><i class="pl"></i><span>18</span></div><div class="ln" style="background:#ffff00"><u style="left:0;width:560px;background:#dcdcff"></u><u style="left:63px;width:56px;background:#ffff96"></u><u style="left:126px;width:28px;background:#ffff96"></u><u style="left:161px;width:28px;background:#ffff96"></u><u style="left:196px;width:28px;background:#ffff96"></u><u style="left:231px;width:84px;background:#ffff96"></u><i class="d" style="left:464px"></i><i class="d" style="left:478px"></i><pre class="tx">        {5D923741-E72C-47A6-B247-C3C0958718DC}.Debug|x86.ActiveCfg = Debug|Win32</pre><i class="tb" style="left:0px"></i><i class="tb" style="left:28px"></i><i class="eol" style="left:560px"></i></div></div>
<div class="row" style="top:270px"><div class="mg"><i class="pl"></i><span>19</span></div><div class="ln" style="background:#ffff00"><u style="left:0;width:546px;background:#dcdcff"></u><u style="left:63px;width:56px;background:#ffff96"></u><u style="left:126px;width:28px;background:#ffff96"></u><u style="left:161px;width:28px;background:#ffff96"></u><u style="left:196px;width:28px;background:#ffff96"></u><u style="left:231px;width:84px;background:#ffff96"></u><i class="d" style="left:450px"></i><i class="d" style="left:464px"></i><pre class="tx">        {5D923741-E72C-47A6-B247-C3C0958718DC}.Debug|x86.Build.0 = Debug|Win32</pre><i class="tb" style="left:0px"></i><i class="tb" style="left:28px"></i><i class="eol" style="left:546px"></i></div></div>
<div class="row" style="top:285px"><div class="mg"><i class="pl"></i><span>20</span></div><div class="ln" style="background:#ffff00"><u style="left:0;width:574px;background:#dcdcff"></u><u style="left:63px;width:56px;background:#ffff96"></u><u style="left:126px;width:28px;background:#ffff96"></u><u style="left:161px;width:28px;background:#ffff96"></u><u style="left:196px;width:28px;background:#ffff96"></u><u style="left:231px;width:84px;background:#ffff96"></u><i class="d" style="left:478px"></i><i class="d" style="left:492px"></i><pre class="tx">        {5D923741-E72C-47A6-B247-C3C0958718DC}.Release|x64.ActiveCfg = Release|x64</pre><i class="tb" style="left:0px"></i><i class="tb" style="left:28px"></i><i class="eol" style="left:574px"></i></div></div>
<div class="row" style="top:300px"><div class="mg"><i class="pl"></i><span>21</span></div><div class="ln" style="background:#ffff00"><u style="left:0;width:560px;background:#dcdcff"></u><u style="left:63px;width:56px;background:#ffff96"></u><u style="left:126px;width:28px;background:#ffff96"></u><u style="left:161px;width:28px;background:#ffff96"></u><u style="left:196px;width:28px;background:#ffff96"></u><u style="left:231px;width:84px;background:#ffff96"></u><i class="d" style="left:464px"></i><i class="d" style="left:478px"></i><pre class="tx">        {5D923741-E72C-47A6-B247-C3C0958718DC}.Release|x64.Build.0 = Release|x64</pre><i class="tb" style="left:0px"></i><i class="tb" style="left:28px"></i><i class="eol" style="left:560px"></i></div></div>
<div class="row" style="top:315px"><div class="mg"><i class="pl"></i><span>22</span></div><div class="ln" style="background:#ffff00"><u style="left:0;width:588px;background:#dcdcff"></u><u style="left:63px;width:56px;background:#ffff96"></u><u style="left:126px;width:28px;background:#ffff96"></u><u style="left:161px;width:28px;background:#ffff96"></u><u style="left:196px;width:28px;background:#ffff96"></u><u style="left:231px;width:84px;background:#ffff96"></u><i class="d" style="left:478px"></i><i class="d" style="left:492px"></i><pre class="tx">        {5D923741-E72C-47A6-B247-C3C0958718DC}.Release|x86.ActiveCfg = Release|Win32</pre><i class="tb" style="left:0px"></i><i class="tb" style="left:28px"></i><i class="eol" style="left:588px"></i></div></div>
<div class="row" style="top:330px"><div class="mg"><i class="pl"></i><span>23</span></div><div class="ln" style="background:#ffff00"><u style="left:0;width:574px;background:#dcdcff"></u><u style="left:63px;width:56px;background:#ffff96"></u><u style="left:126px;width:28px;background:#ffff96"></u><u style="left:161px;width:28px;background:#ffff96"></u><u style="left:196px;width:28px;background:#ffff96"></u><u style="left:231px;width:84px;background:#ffff96"></u><i class="d" style="left:464px"></i><i class="d" style="left:478px"></i><pre class="tx">        {5D923741-E72C-47A6-B247-C3C0958718DC}.Release|x86.Build.0 = Release|Win32</pre><i class="tb" style="left:0px"></i><i class="tb" style="left:28px"></i><i class="eol" style="left:574px"></i></div></div>
<div class="row" style="top:345px"><div class="mg"><span>24</span></div><div class="ln"><pre class="tx">    EndGlobalSection</pre><i class="tb" style="left:0px"></i><i class="eol" style="left:140px"></i></div></div>
<div class="row" style="top:360px"><div class="mg"><span>25</span></div><div class="ln"><i class="d" style="left:261px"></i><i class="d" style="left:275px"></i><pre class="tx">    GlobalSection(SolutionProperties) = preSolution</pre><i class="tb" style="left:0px"></i><i class="eol" style="left:357px"></i></div></div>
<div class="row" style="top:375px"><div class="mg"><span>26</span></div><div class="ln"><i class="d" style="left:170px"></i><i class="d" style="left:184px"></i><pre class="tx">        HideSolutionNode = FALSE</pre><i class="tb" style="left:0px"></i><i class="tb" style="left:28px"></i><i class="eol" style="left:224px"></i></div></div>
<div class="row" style="top:390px"><div class="mg"><span>27</span></div><div class="ln"><pre class="tx">    EndGlobalSection</pre><i class="tb" style="left:0px"></i><i class="eol" style="left:140px"></i></div></div>
<div class="row" style="top:405px"><div class="mg"><span>28</span></div><div class="ln"><i class="d" style="left:275px"></i><i class="d" style="left:289px"></i><pre class="tx">    GlobalSection(ExtensibilityGlobals) = postSolution</pre><i class="tb" style="left:0px"></i><i class="eol" style="left:378px"></i></div></div>
<div class="row" style="top:420px"><div class="mg"><i class="pl"></i><span>29</span></div><div class="ln" style="background:#ffff00"><u style="left:0;width:427px;background:#dcdcff"></u><u style="left:168px;width:56px;background:#ffff96"></u><u style="left:231px;width:28px;background:#ffff96"></u><u style="left:266px;width:28px;background:#ffff96"></u><u style="left:301px;width:28px;background:#ffff96"></u><u style="left:336px;width:84px;background:#ffff96"></u><i class="d" style="left:142px"></i><i class="d" style="left:156px"></i><pre class="tx">        SolutionGuid = {7ABB0DB0-1C30-49C0-9DFB-A4AFE4EFE529}</pre><i class="tb" style="left:0px"></i><i class="tb" style="left:28px"></i><i class="eol" style="left:427px"></i></div></div>
<div class="row" style="top:435px"><div class="mg"><span>30</span></div><div class="ln"><pre class="tx">    EndGlobalSection</pre><i class="tb" style="left:0px"></i><i class="eol" style="left:140px"></i></div></div>
<div class="row" style="top:450px"><div class="mg"><span>31</span></div><div class="ln"><pre class="tx">EndGlobal</pre><i class="eol" style="left:63px"></i></div></div>
<div class="row" style="top:465px"><div class="mg"><span>32</span></div><div class="ln"></div></div>
</div>
<div class="selb" style="left:733px;top:255px;width:609px"></div>
<div class="selb" style="left:733px;top:268px;width:609px"></div>
<div class="sbv" style="left:1343px"><div class="thumb" style="left:0;top:17px;width:15px;height:462px"></div>
 <div class="chev" style="left:4px;top:7px;transform:rotate(45deg)"></div>
 <div class="chev" style="left:4px;top:498px;transform:rotate(225deg)"></div></div>
<div class="sbh" style="left:697px;width:652px"><div class="thumb" style="left:17px;top:0;width:361px;height:15px"></div>
 <div class="chev" style="left:7px;top:4px;transform:rotate(-45deg)"></div>
 <div class="chev" style="left:632px;top:4px;transform:rotate(135deg)"></div></div>

<svg style="left:0;top:0" width="1349" height="707" viewBox="0 0 1349 707"><path d="M605.6 200L569.5 224.8L568.5 221L562.7 238.5L580.1 233.3L575.5 232Z" fill="#ff1a0e"/><path d="M1207.6 208.1L1187 215.4L1186.4 212L1181 222.4H1191.8L1189.8 220.7Z" fill="#ff1a0e"/></svg>
<!-- bottom line diff bar -->
<div id="bot">
<div class="row" style="top:0"><div class="ln" style="background:#ffc864"><u style="left:0;width:427px;background:#dcdcff"></u><u style="left:168px;width:56px;background:#c86464"></u><u style="left:231px;width:28px;background:#c86464"></u><u style="left:266px;width:28px;background:#c86464"></u><u style="left:301px;width:28px;background:#c86464"></u><u style="left:336px;width:84px;background:#c86464"></u><i class="d" style="left:142px"></i><i class="d" style="left:156px"></i><pre class="tx">        SolutionGuid = {560FBC25-DD09-4750-98DE-BFC9C286B623}</pre><i class="tb" style="left:0px"></i><i class="tb" style="left:28px"></i><i class="eol" style="left:427px"></i></div></div>
<div class="row" style="top:15px"><div class="ln" style="background:#ffff00"><u style="left:0;width:427px;background:#dcdcff"></u><u style="left:168px;width:56px;background:#ffff96"></u><u style="left:231px;width:28px;background:#ffff96"></u><u style="left:266px;width:28px;background:#ffff96"></u><u style="left:301px;width:28px;background:#ffff96"></u><u style="left:336px;width:84px;background:#ffff96"></u><i class="d" style="left:142px"></i><i class="d" style="left:156px"></i><pre class="tx">        SolutionGuid = {7ABB0DB0-1C30-49C0-9DFB-A4AFE4EFE529}</pre><i class="tb" style="left:0px"></i><i class="tb" style="left:28px"></i><i class="eol" style="left:427px"></i></div></div>
</div>

</div>
</body></html>
